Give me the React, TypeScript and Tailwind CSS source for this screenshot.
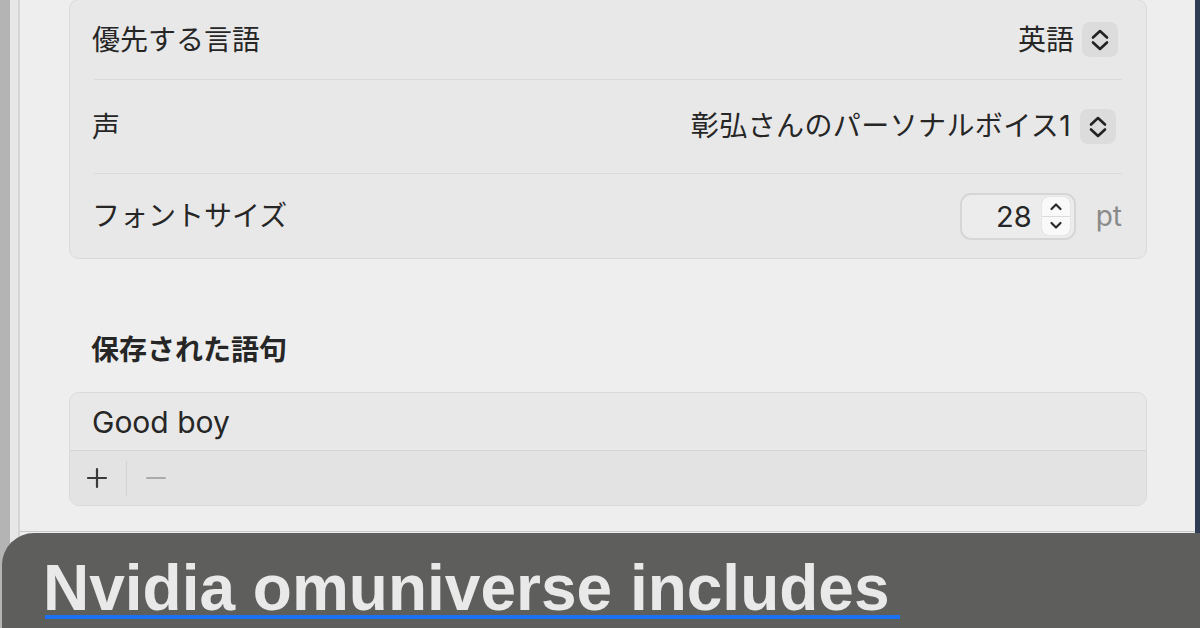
import React from "react";

const jp = { fontFamily: '"Inter", "Noto Sans CJK JP", sans-serif' };

function PopupChevrons() {
  return (
    <div className="w-[36px] h-[35px] rounded-[8px] bg-[#dcdcdc] flex items-center justify-center">
      <svg width="20" height="24" viewBox="0 0 20 24" fill="none" stroke="#222" strokeWidth="2.6" strokeLinecap="round" strokeLinejoin="round">
        <path d="M3 9.5 L10 3 L17 9.5" />
        <path d="M3 14.5 L10 21 L17 14.5" />
      </svg>
    </div>
  );
}

function Row({ label, children, h }: { label: string; children: React.ReactNode; h: string }) {
  return (
    <div className={`flex items-center justify-between pl-[22px] pr-[28px] ${h}`}>
      <span className="text-[28px] text-[#262626] leading-none">{label}</span>
      <div className="flex items-center">{children}</div>
    </div>
  );
}

export default function App() {
  return (
    <div className="w-[1200px] h-[628px] relative overflow-hidden bg-[#eeeeee] flex" style={jp}>
      <div className="w-[10px] h-full bg-[#b4b4b4]" />
      <div className="w-[8px] h-full bg-[#e7e7e7]" />
      <div className="w-[2px] h-full bg-[#d6d6d6]" />
      <div className="flex-1 h-[532px] flex flex-col pl-[49px] pr-[48px] border-b border-[#c9c9c9]">
        <div className="mt-[-1px] rounded-[10px] border border-[#dadada] bg-[#e8e8e8] flex flex-col">
          <Row label="優先する言語" h="h-[79px]">
            <span className="text-[28px] text-[#262626] leading-none mr-[8px]">英語</span>
            <PopupChevrons />
          </Row>
          <div className="mx-[24px] h-px bg-[#d9d9d9]" />
          <Row label="声" h="h-[93px]">
            <span className="text-[28px] text-[#262626] leading-none mr-[9px] mt-[-2px] tracking-[0.4px]">彰弘さんのパーソナルボイス1</span>
            <div className="mr-[2px]">
              <PopupChevrons />
            </div>
          </Row>
          <div className="mx-[24px] h-px bg-[#d9d9d9]" />
          <div className="flex items-center justify-between pl-[22px] pr-[24px] h-[84px]">
            <span className="text-[28px] text-[#262626] leading-none">フォントサイズ</span>
            <div className="flex items-center">
              <div className="w-[116px] h-[47px] rounded-[11px] border-2 border-[#d6d6d6] bg-[#ececec] flex items-center justify-end pr-[4px]">
                <span className="text-[29px] text-[#262626] leading-none mr-[10px]">28</span>
                <div className="w-[28px] h-[38px] rounded-[6px] bg-[#f9f9f9] flex flex-col shadow-[0_0_1px_rgba(0,0,0,0.25)]">
                  <div className="flex-1 flex items-center justify-center border-b border-[#dcdcdc]">
                    <svg width="14" height="9" viewBox="0 0 14 9" fill="none" stroke="#2a2a2a" strokeWidth="2.2" strokeLinecap="round" strokeLinejoin="round">
                      <path d="M2.5 7 L7 2.5 L11.5 7" />
                    </svg>
                  </div>
                  <div className="flex-1 flex items-center justify-center">
                    <svg width="14" height="9" viewBox="0 0 14 9" fill="none" stroke="#2a2a2a" strokeWidth="2.2" strokeLinecap="round" strokeLinejoin="round">
                      <path d="M2.5 2 L7 6.5 L11.5 2" />
                    </svg>
                  </div>
                </div>
              </div>
              <span className="ml-[20px] text-[28px] text-[#8a8a8a] leading-none">pt</span>
            </div>
          </div>
        </div>

        <div className="mt-[77px] h-[28px] pl-[22px] flex items-center">
          <span className="text-[28px] font-bold text-[#262626] leading-none">保存された語句</span>
        </div>

        <div className="mt-[28px] rounded-[10px] border border-[#dadada] bg-[#e8e8e8] flex flex-col overflow-hidden">
          <div className="h-[57px] flex items-center pl-[22px]">
            <span className="text-[30px] text-[#262626] leading-none">Good boy</span>
          </div>
          <div className="h-[55px] border-t border-[#d6d6d6] bg-[#e3e3e3] flex items-center pl-[16px]">
            <svg width="22" height="22" viewBox="0 0 22 22" stroke="#3a3a3a" strokeWidth="2.2" strokeLinecap="round">
              <path d="M11 2 V20 M2 11 H20" />
            </svg>
            <div className="w-px h-[35px] bg-[#d2d2d2] ml-[18px]" />
            <svg className="ml-[18px]" width="22" height="22" viewBox="0 0 22 22" stroke="#ababab" strokeWidth="2" strokeLinecap="round">
              <path d="M2 11 H20" />
            </svg>
          </div>
        </div>
      </div>
      <div className="w-[5px] h-full bg-[#2f3d54]" />

      <div className="absolute left-[2px] top-[533px] w-[1198px] h-[95px] bg-[#5e5e5c] rounded-tl-[32px] flex flex-col pl-[41px] pt-[23px]">
        <div
          className="h-[64px] leading-[64px] text-[64px] font-bold text-[#e9e9e9] whitespace-nowrap"
          style={{ fontFamily: '"Liberation Sans", Arial, sans-serif' }}
        >
          Nvidia omuniverse includes
        </div>
        <div className="mt-[-5px] ml-[2px] h-[4px] w-[855px] bg-[#1a72f2]" />
      </div>
    </div>
  );
}
